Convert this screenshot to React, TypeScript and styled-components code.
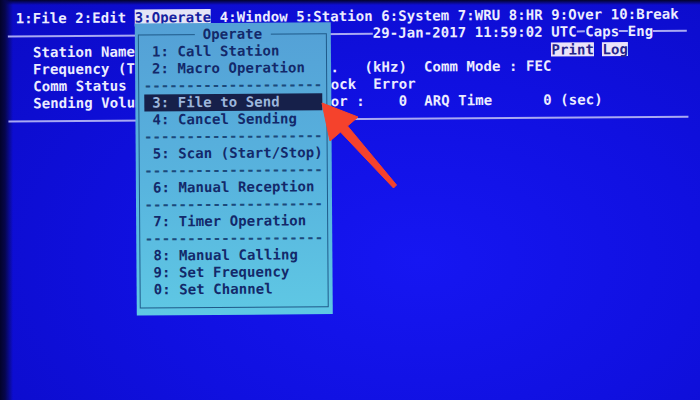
import React from 'react'
import styled, { createGlobalStyle } from 'styled-components'

const COL = 8.5
const ROW = 17
const TOP = 8

const at = (...parts: [number, string][]) => {
  const chars: string[] = Array(80).fill(' ')
  parts.forEach(([col, text]) =>
    text.split('').forEach((c, i) => {
      if (col + i < 80) chars[col + i] = c
    })
  )
  return chars.join('').replace(/\s+$/, '')
}

const GlobalStyle = createGlobalStyle`
  html, body {
    margin: 0;
    padding: 0;
    background: #02021e;
  }
  body {
    width: 700px;
    height: 400px;
    overflow: hidden;
  }
`

const Monitor = styled.div`
  position: relative;
  width: 700px;
  height: 400px;
  overflow: hidden;
  background:
    linear-gradient(to right, #03032a 0px, #06064c 5px, rgba(12, 12, 200, 0) 13px),
    linear-gradient(to bottom, #03032a 0px, rgba(12, 12, 200, 0) 5px),
    radial-gradient(ellipse 80% 90% at 60% 65%, #1616f2 0%, #1010e0 50%, #0b0bc6 100%);
`

const Terminal = styled.div`
  position: relative;
  padding: ${TOP}px 0 0 ${COL}px;
  transform: rotate(-0.4deg);
  transform-origin: 350px 200px;
  font-family: "DejaVu Sans Mono", "Liberation Mono", monospace;
  font-weight: bold;
  font-size: 14px;
  letter-spacing: 0.07px;
  color: #ececff;
`

const Row = styled.div`
  display: flex;
  align-items: center;
  height: ${ROW}px;
  line-height: ${ROW}px;
  white-space: pre;
`

const Rule = styled.span<{ $cols: number; $drop?: number }>`
  flex-shrink: 0;
  width: ${(p) => p.$cols * COL}px;
  height: 2px;
  margin-top: ${(p) => p.$drop ?? 1}px;
  background: #a9a9f2;
`

const Gap = styled.span<{ $cols: number }>`
  flex-shrink: 0;
  width: ${(p) => p.$cols * COL}px;
`

const MenuHot = styled.span`
  background: #e4e4f6;
  color: #1420a0;
`

const Tag = styled.span`
  display: inline-block;
  line-height: 14px;
  background: #ebe3fa;
  color: #24248c;
`

const Dropdown = styled.div`
  position: absolute;
  left: ${COL + 15 * COL}px;
  top: ${TOP + ROW - 3}px;
  width: ${23 * COL}px;
  height: ${17 * ROW}px;
  padding-top: 3px;
  background: linear-gradient(180deg, #54a0d6 0%, #58b4de 55%, #5fc8e4 100%);
  color: #13296a;
`

const Frame = styled.div`
  position: absolute;
  top: ${ROW / 2 + 2}px;
  bottom: ${ROW / 2 - 1}px;
  left: ${COL / 2 - 1}px;
  right: ${COL / 2 - 1}px;
  border: 1.5px solid #1f5a8a;
`

const Title = styled.div`
  position: absolute;
  top: 3px;
  left: 0;
  right: 0;
  height: ${ROW}px;
  line-height: ${ROW}px;
  text-align: center;

  span {
    background: #54a1d6;
    padding: 0 ${COL}px;
  }
`

const List = styled.div`
  position: relative;
  display: flex;
  flex-direction: column;
  padding-top: ${ROW}px;
`

const Item = styled.div<{ $active?: boolean }>`
  height: ${ROW}px;
  line-height: ${ROW}px;
  width: ${21 * COL}px;
  margin-left: ${COL}px;
  padding-left: ${COL}px;
  box-sizing: border-box;
  white-space: pre;
  background: ${(p) => (p.$active ? '#16204a' : 'transparent')};
  color: ${(p) => (p.$active ? '#9cb6dc' : 'inherit')};
`

const Dashes = styled.div`
  height: ${ROW}px;
  line-height: ${ROW}px;
  margin-left: ${COL}px;
  white-space: pre;
  color: #1b4a7c;
`

const Arrow = styled.svg`
  position: absolute;
  left: 0;
  top: 0;
  pointer-events: none;
`

type Entry = { key: string; label?: string; active?: boolean; dash?: boolean }

const entries: Entry[] = [
  { key: '1', label: '1: Call Station' },
  { key: '2', label: '2: Macro Operation' },
  { key: 'd1', dash: true },
  { key: '3', label: '3: File to Send', active: true },
  { key: '4', label: '4: Cancel Sending' },
  { key: 'd2', dash: true },
  { key: '5', label: '5: Scan (Start/Stop)' },
  { key: 'd3', dash: true },
  { key: '6', label: '6: Manual Reception' },
  { key: 'd4', dash: true },
  { key: '7', label: '7: Timer Operation' },
  { key: 'd5', dash: true },
  { key: '8', label: '8: Manual Calling' },
  { key: '9', label: '9: Set Frequency' },
  { key: '0', label: '0: Set Channel' },
]

export default function App() {
  return (
    <>
      <GlobalStyle />
      <Monitor>
        <Terminal>
          <Row>
            {' 1:File 2:Edit '}
            <MenuHot>3:Operate</MenuHot>
            {' 4:Window 5:Station 6:System 7:WRU 8:HR 9:Over 10:Break'}
          </Row>
          <Row>
            <Rule $cols={43} $drop={1} />
            {'29-Jan-2017 11:59:02 UTC'}
            <Rule $cols={1} $drop={-1} />
            {'Caps'}
            <Rule $cols={1} $drop={-1} />
            {'Eng'}
            <Rule $cols={4} $drop={-1} />
          </Row>
          <Row>
            {at([3, 'Station Name'], [17, ': JA1XYZ']).padEnd(64)}
            <Tag>Print</Tag>
            <Gap $cols={1} />
            <Tag>Log</Tag>
          </Row>
          <Row>
            {at([3, 'Frequency (TX)'], [18, ': 14085.5'], [38, '.'], [42, '(kHz)'], [49, 'Comm Mode : FEC'])}
          </Row>
          <Row>
            {at([3, 'Comm Status'], [17, ': Standby'], [36, 'Block'], [43, 'Error'])}
          </Row>
          <Row>
            {at([3, 'Sending Volume'], [18, ': 0'], [35, 'Error'], [41, ':'], [46, '0'], [49, 'ARQ Time'], [63, '0'], [65, '(sec)'])}
          </Row>
          <Row>
            <Rule $cols={80} />
          </Row>

          <Dropdown>
            <Frame />
            <Title>
              <span>Operate</span>
            </Title>
            <List>
              {entries.map((e) =>
                e.dash ? (
                  <Dashes key={e.key}>{'-'.repeat(21)}</Dashes>
                ) : (
                  <Item key={e.key} $active={e.active}>
                    {e.label}
                  </Item>
                )
              )}
            </List>
          </Dropdown>
        </Terminal>

        <Arrow width={700} height={400} viewBox="0 0 700 400">
          <polygon
            points="322,103 358,117 347.5,126 396.5,185 393.5,188 340.5,132 330,141"
            fill="#f5422c"
            stroke="#f5422c"
            strokeWidth={1}
            strokeLinejoin="round"
          />
        </Arrow>
      </Monitor>
    </>
  )
}
